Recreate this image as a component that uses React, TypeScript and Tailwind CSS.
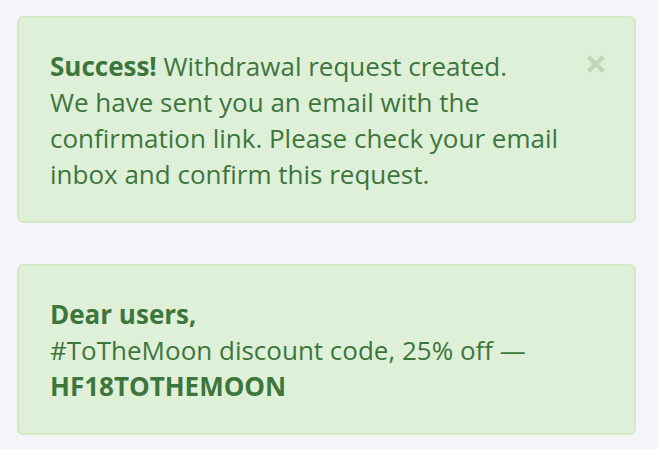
export default function App() {
  return (
    <div className="min-h-screen bg-[#f4f5f9] pt-4 pl-[17px] pr-[22px] font-['Open_Sans',sans-serif] text-[26px] leading-[36px] text-[#3c763d]">
      <div className="relative rounded-[6px] border-2 border-[#d6e9c6] bg-[#dff0d8] pt-[30px] pb-[29px] pl-[31px] pr-[60px]">
        <button className="absolute right-[27px] top-[25px] text-[40px] font-bold leading-none text-[#3c763d] opacity-20">
          ×
        </button>
        <p>
          <strong>Success!</strong> Withdrawal request created.
          <br />
          We have sent you an email with the confirmation link. Please check your email inbox and confirm this request.
        </p>
      </div>
      <div className="mt-[41px] rounded-[6px] border-2 border-[#d6e9c6] bg-[#dff0d8] pt-[30px] pb-[29px] px-[31px]">
        <p className="font-bold">Dear users,</p>
        <p>#ToTheMoon discount code, 25% off —</p>
        <p className="font-bold">HF18TOTHEMOON</p>
      </div>
    </div>
  );
}
